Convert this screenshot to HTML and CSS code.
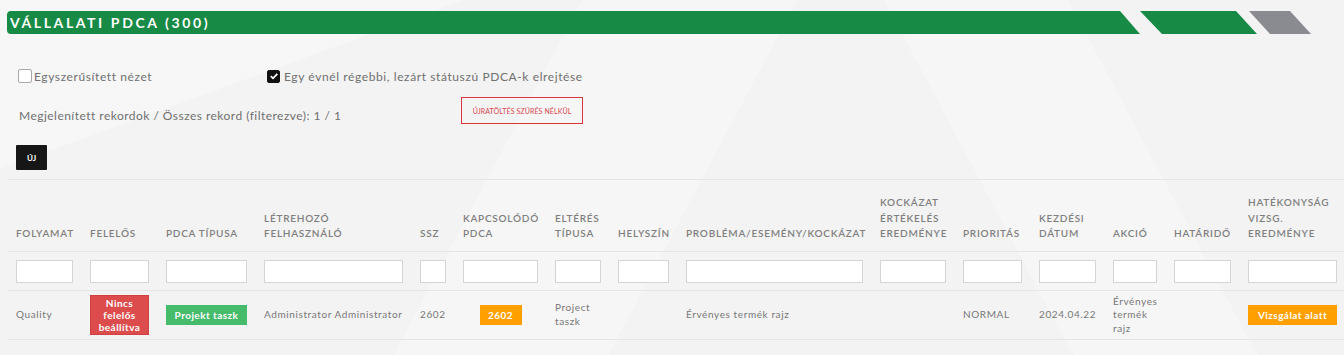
FILE: index.html
```html
<!DOCTYPE html>
<html lang="hu">
<head>
<meta charset="utf-8">
<title>Vállalati PDCA</title>
<link rel="stylesheet" href="styles.css">
</head>
<body>
<div class="page">
  <div class="title-row">
    <div class="title-bar"><h1 class="title">VÁLLALATI PDCA (300)</h1></div>
    <svg class="title-deco" width="171" height="23" viewBox="0 0 171 23">
      <polygon points="0,0 96,0 117,23 22,23" fill="#178a45"/>
      <polygon points="109,0 150,0 171,23 130,23" fill="#898b90"/>
    </svg>
  </div>

  <div class="options">
    <label class="check check-first"><span class="box"></span>Egyszerűsített nézet</label>
    <label class="check"><span class="box checked"><svg width="10" height="10" viewBox="0 0 10 10"><path d="M1.8 5.2 L4 7.3 L8.3 2.8" fill="none" stroke="#fff" stroke-width="1.8"/></svg></span>Egy évnél régebbi, lezárt státuszú PDCA-k elrejtése</label>
  </div>

  <div class="records">
    <span class="count">Megjelenített rekordok / Összes rekord (filterezve): 1 / 1</span>
    <button class="reload">ÚJRATÖLTÉS SZŰRÉS NÉLKÜL</button>
  </div>

  <button class="new">ÚJ</button>

  <table class="grid">
    <colgroup>
      <col style="width:74px"><col style="width:76px"><col style="width:98px"><col style="width:156px"><col style="width:43px"><col style="width:92px"><col style="width:63px"><col style="width:68px"><col style="width:194px"><col style="width:83px"><col style="width:76px"><col style="width:74px"><col style="width:61px"><col style="width:74px"><col style="width:106px">
    </colgroup>
    <thead>
      <tr class="head">
        <th>FOLYAMAT</th><th>FELELŐS</th><th>PDCA TÍPUSA</th><th>LÉTREHOZÓ FELHASZNÁLÓ</th><th>SSZ</th><th>KAPCSOLÓDÓ PDCA</th><th>ELTÉRÉS TÍPUSA</th><th>HELYSZÍN</th><th>PROBLÉMA/ESEMÉNY/KOCKÁZAT</th><th>KOCKÁZAT ÉRTÉKELÉS EREDMÉNYE</th><th>PRIORITÁS</th><th>KEZDÉSI DÁTUM</th><th>AKCIÓ</th><th>HATÁRIDŐ</th><th>HATÉKONYSÁG VIZSG. EREDMÉNYE</th>
      </tr>
      <tr class="filters">
        <td><input type="text"></td><td><input type="text"></td><td><input type="text"></td><td><input type="text"></td><td><input type="text"></td><td><input type="text"></td><td><input type="text"></td><td><input type="text"></td><td><input type="text"></td><td><input type="text"></td><td><input type="text"></td><td><input type="text"></td><td><input type="text"></td><td><input type="text"></td><td><input type="text"></td>
      </tr>
    </thead>
    <tbody>
      <tr class="row">
        <td>Quality</td>
        <td><span class="badge red">Nincs felelős beállítva</span></td>
        <td><span class="badge green">Projekt taszk</span></td>
        <td>Administrator Administrator</td>
        <td>2602</td>
        <td class="center"><span class="badge orange small">2602</span></td>
        <td>Project taszk</td>
        <td></td>
        <td>Érvényes termék rajz</td>
        <td></td>
        <td>NORMAL</td>
        <td>2024.04.22</td>
        <td>Érvényes termék rajz</td>
        <td></td>
        <td><span class="badge orange">Vizsgálat alatt</span></td>
      </tr>
    </tbody>
  </table>
</div>
</body>
</html>
```

FILE: styles.css
```css
* { box-sizing: border-box; }
html, body { margin: 0; padding: 0; }
body {
  width: 1344px;
  height: 355px;
  overflow: hidden;
  font-family: Lato, "Open Sans", sans-serif;
  color: #777;
  background-color: #f3f3f3;
  background-image:
    linear-gradient(118deg, rgba(255,255,255,0) 0 38%, rgba(255,255,255,0.25) 38% 52%, rgba(255,255,255,0) 52%),
    linear-gradient(62deg, rgba(255,255,255,0) 0 70%, rgba(255,255,255,0.25) 70% 82%, rgba(255,255,255,0) 82%),
    linear-gradient(160deg, rgba(255,255,255,0.3) 0 20%, rgba(255,255,255,0) 20%);
}
.page { padding-top: 11px; }

.title-row { display: flex; align-items: flex-start; padding-left: 7px; }
.title-bar {
  width: 1133px;
  height: 23px;
  background: #178a45;
  border-radius: 4px 0 0 4px;
  clip-path: polygon(0 0, calc(100% - 20px) 0, 100% 100%, 0 100%);
  display: flex;
  align-items: center;
  padding-left: 3px;
}
.title {
  margin: 0;
  color: #fff;
  font-size: 14px;
  font-weight: 700;
  letter-spacing: 2.6px;
  line-height: 23px;
}
.title-deco { display: block; }

.options { display: flex; align-items: center; margin-top: 35px; padding-left: 18px; height: 14px; }
.check { display: flex; align-items: center; font-size: 12px; letter-spacing: 0.6px; color: #707070; }
.check-first { width: 249px; }
.box {
  width: 14px; height: 14px;
  background: #fff;
  border: 1px solid #a9a9a9;
  border-radius: 2px;
  margin-right: 2px;
  display: flex; align-items: center; justify-content: center;
}
.box.checked { background: #111; border-color: #111; width: 13px; height: 13px; margin-right: 4px; }

.records { display: flex; align-items: flex-start; margin-top: 14px; padding-left: 19px; height: 34px; }
.count { font-size: 12px; letter-spacing: 0.47px; color: #707070; margin-top: 11px; width: 442px; }
.reload {
  font-family: inherit;
  background: transparent;
  border: 1.5px solid #d9363e;
  color: #d9474e;
  font-size: 7px;
  letter-spacing: 0.1px;
  width: 122px;
  height: 27px;
  padding: 0;
}

.new {
  display: block;
  margin: 14px 0 0 16px;
  width: 31px;
  height: 25px;
  background: #161616;
  color: #fff;
  border: 0;
  border-radius: 1px;
  font-family: inherit;
  font-weight: 700;
  font-size: 8px;
  padding: 0;
}

.grid {
  margin: 9px 0 0 8px;
  table-layout: fixed;
  width: 1338px;
  border-collapse: collapse;
  border-top: 1px solid #e6e6e6;
}
.grid th, .grid td { padding: 0 9px 0 8px; }
.head th {
  text-align: left;
  vertical-align: bottom;
  font-size: 10px;
  font-weight: 600;
  letter-spacing: 0.75px;
  line-height: 15.5px;
  color: #7f7f7f;
  padding-top: 15px;
  padding-bottom: 9px;
  border-bottom: 1px solid #e6e6e6;
}
.filters td { padding-top: 8px; padding-bottom: 7px; border-bottom: 1px solid #e6e6e6; }
.filters input {
  display: block;
  width: 100%;
  height: 23px;
  border: 1px solid #d5d5d5;
  background: #fff;
  border-radius: 0;
  margin: 0;
}
.row td {
  font-size: 10px;
  letter-spacing: 0.6px;
  line-height: 13.5px;
  color: #777;
  vertical-align: middle;
  padding-top: 4px;
  padding-bottom: 4px;
  height: 49px;
  border-bottom: 1px solid #e6e6e6;
}
.row td.center { text-align: center; }
.badge {
  display: block;
  color: #fff;
  font-weight: 700;
  text-align: center;
  font-size: 10px;
  letter-spacing: 0.45px;
}
.badge.red { background: #dd4c4c; line-height: 12px; padding: 1px 4px; border: 1px solid #d04040; }
.badge.green { background: #45bb6b; line-height: 20px; }
.badge.orange { background: #ffa000; line-height: 20px; }
.badge.small { display: inline-block; width: 42px; }
```
